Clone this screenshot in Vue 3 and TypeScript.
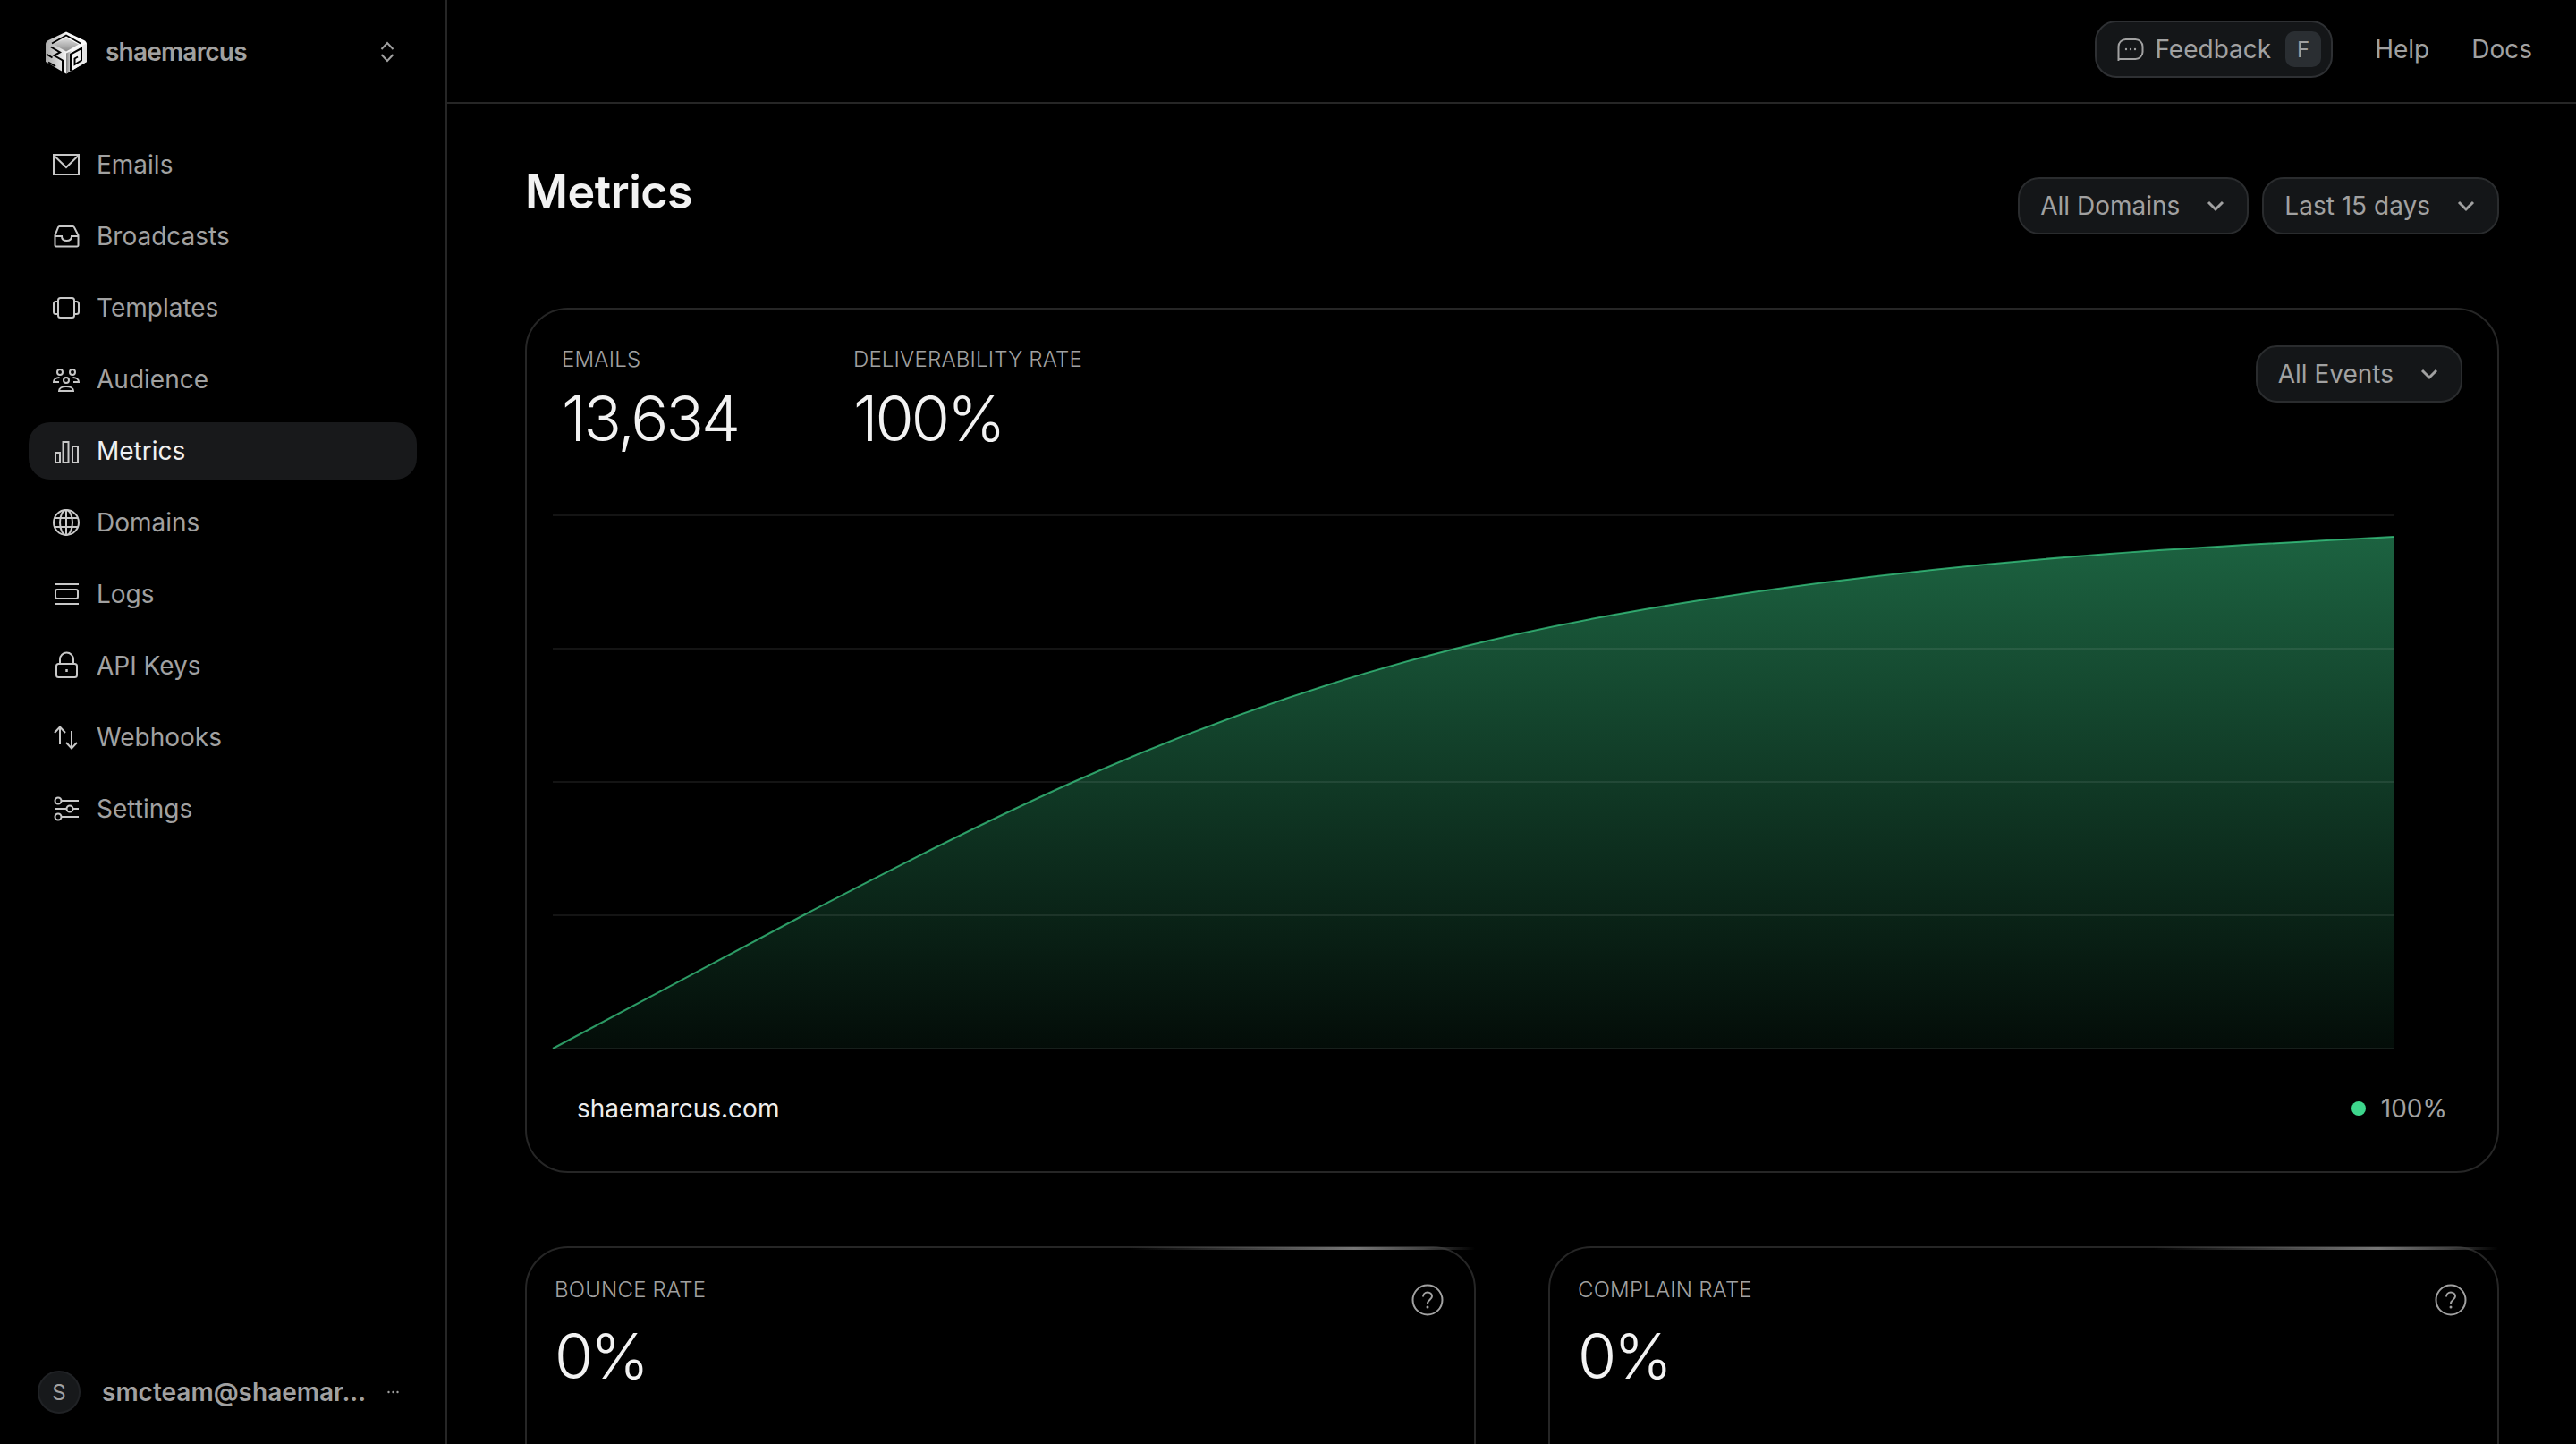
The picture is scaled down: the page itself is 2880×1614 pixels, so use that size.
<script setup lang="ts">
interface NavItem {
  label: string
  icon: string
  active?: boolean
}

const navItems: NavItem[] = [
  { label: 'Emails', icon: '<rect x="2" y="5" width="28" height="22"/><path d="M2.5 6 16 19 29.5 6"/>' },
  { label: 'Broadcasts', icon: '<path d="M8.5 5h15a1.5 1.5 0 0 1 1.4.9L29.5 15v11a1.5 1.5 0 0 1-1.5 1.5H5A1.5 1.5 0 0 1 3.500 26V15L7.100 5.900A1.500 1.500 0 0 1 8.500 5Z"/><path d="M3.500 16H11c0 3 2 5 5.500 5s5.500-2 5.500-5h7.500"/>' },
  { label: 'Templates', icon: '<rect x="7" y="5" width="18" height="22" rx="2.500"/><path d="M7 9H4.500A2.500 2.500 0 0 0 2 11.500v9A2.500 2.500 0 0 0 4.500 23H7"/><path d="M25 9h2.500a2.500 2.500 0 0 1 2.500 2.500v9a2.500 2.500 0 0 1-2.500 2.500H25"/>' },
  { label: 'Audience', icon: '<circle cx="9" cy="8" r="3"/><circle cx="23" cy="8" r="3"/><circle cx="16" cy="17" r="3"/><path d="M8.500 14C5 14 2 16 2 19h6"/><path d="M23.500 14c3.500 0 6.500 2 6.500 5h-6"/><path d="M8 29c0-3 3.500-5 8-5s8 2 8 5Z"/>' },
  { label: 'Metrics', active: true, icon: '<rect x="4" y="18" width="5" height="11"/><rect x="12.500" y="6" width="6" height="23"/><rect x="23" y="11" width="6" height="18"/>' },
  { label: 'Domains', icon: '<circle cx="16" cy="16" r="14"/><ellipse cx="16" cy="16" rx="7" ry="14"/><path d="M16 2v28M3 11h26M3 21h26"/>' },
  { label: 'Logs', icon: '<path d="M3 5h27M3 27h27"/><rect x="4" y="11" width="25" height="10" rx="2"/>' },
  { label: 'API Keys', icon: '<rect x="5" y="14" width="23" height="15" rx="2.500"/><path d="M9 14V9a7.500 7.500 0 0 1 15 0v5"/><path d="M16.500 20v3" stroke-width="2.500"/>' },
  { label: 'Webhooks', icon: '<path d="M9 5v19M3 11l6-6.500 6 6.500"/><path d="M22 9v19M16 22l6 6.500 6-6.500"/>' },
  { label: 'Settings', icon: '<path d="M10.500 7H30M3 16h13.500M24 16h6M10.500 25H30"/><circle cx="7" cy="7" r="3.500"/><circle cx="20" cy="16" r="3.500"/><circle cx="7" cy="25" r="3.500"/>' },
]

const curve: [number, number][] = [
  [618, 1172], [900, 1022], [1200, 874], [1627, 725], [1900, 671], [2359, 619], [2676, 600],
]

// Natural cubic spline through the samples, written out as Bezier segments.
function linePath(pts: [number, number][]): string {
  const n = pts.length
  const h: number[] = []
  for (let i = 0; i < n - 1; i++) h.push(pts[i + 1][0] - pts[i][0])
  const m: number[] = new Array(n).fill(0)
  const c: number[] = new Array(n).fill(0)
  const e: number[] = new Array(n).fill(0)
  for (let i = 1; i < n - 1; i++) {
    const rhs = 6 * ((pts[i + 1][1] - pts[i][1]) / h[i] - (pts[i][1] - pts[i - 1][1]) / h[i - 1])
    const denom = 2 * (h[i - 1] + h[i]) - h[i - 1] * c[i - 1]
    c[i] = h[i] / denom
    e[i] = (rhs - h[i - 1] * e[i - 1]) / denom
  }
  for (let i = n - 2; i > 0; i--) m[i] = e[i] - c[i] * m[i + 1]
  let d = `M${pts[0][0]} ${pts[0][1]}`
  for (let i = 0; i < n - 1; i++) {
    const slope = (pts[i + 1][1] - pts[i][1]) / h[i]
    const t0 = slope - (h[i] * (2 * m[i] + m[i + 1])) / 6
    const t1 = slope + (h[i] * (m[i] + 2 * m[i + 1])) / 6
    const step = h[i] / 3
    d += ` C${pts[i][0] + step} ${pts[i][1] + t0 * step} ${pts[i + 1][0] - step} ${pts[i + 1][1] - t1 * step} ${pts[i + 1][0]} ${pts[i + 1][1]}`
  }
  return d
}

const line = linePath(curve)
const area = `${line} L2676 1172 L618 1172 Z`
const gridLines = [576, 725, 874, 1023, 1172]
const statCards = [
  { label: 'BOUNCE RATE', value: '0%' },
  { label: 'COMPLAIN RATE', value: '0%' },
]
</script>

<template>
  <div class="app">
    <aside class="sidebar">
      <div class="brand">
        <svg class="logo" viewBox="0 0 48 48" fill="none">
          <defs>
            <linearGradient id="lg-left" x1="0" y1="0" x2="1" y2="0">
              <stop offset="0" stop-color="#a8a8a8" />
              <stop offset="0.5" stop-color="#f4f4f4" />
              <stop offset="1" stop-color="#ffffff" />
            </linearGradient>
            <linearGradient id="lg-right" x1="0" y1="0" x2="1" y2="0">
              <stop offset="0" stop-color="#808080" />
              <stop offset="0.3" stop-color="#f8f8f8" />
              <stop offset="1" stop-color="#e4e4e4" />
            </linearGradient>
            <linearGradient id="lg-top" x1="0" y1="0" x2="0" y2="1">
              <stop offset="0" stop-color="#e0e0e0" />
              <stop offset="1" stop-color="#8a8a8a" />
            </linearGradient>
          </defs>
          <path d="M24 1 44 10.500Q47 12 47 15V34.500L24 48 1 34.500V15Q1 12 4 10.500Z" fill="url(#lg-left)" />
          <path d="M24 25 47 14V34.500L24 48Z" fill="url(#lg-right)" />
          <path d="M24 8 38 15 24 23 10 15Z" fill="url(#lg-top)" />
          <path d="M8 14 24 5 40 14" stroke="#000" stroke-width="1.800" />
          <path d="M7 18 17 24 10.500 27.500 20 33V46M2 26 8.500 30M4 35 12 39.500" stroke="#000" stroke-width="2" />
          <path d="M29 45V26L41 19.500V33L33.500 37.500V31L37 29" stroke="#000" stroke-width="2" />
        </svg>
        <span class="brand-name">shaemarcus</span>
        <svg class="updown" viewBox="0 0 16 24" fill="none" stroke="currentColor" stroke-width="2">
          <path d="M1.500 9 8 2l6.500 7M1.500 15 8 22l6.500-7" />
        </svg>
      </div>

      <nav class="nav">
        <a v-for="item in navItems" :key="item.label" class="nav-item" :class="{ active: item.active }">
          <svg class="nav-icon" viewBox="0 0 32 32" fill="none" stroke="currentColor" stroke-width="2" v-html="item.icon"></svg>
          <span>{{ item.label }}</span>
        </a>
      </nav>

      <div class="user">
        <span class="avatar">S</span>
        <span class="email">smcteam@shaemar...</span>
        <svg class="more" viewBox="0 0 14 4" fill="currentColor">
          <circle cx="2" cy="2" r="1.200" />
          <circle cx="7" cy="2" r="1.200" />
          <circle cx="12" cy="2" r="1.200" />
        </svg>
      </div>
    </aside>

    <main class="main">
      <header class="topbar">
        <button class="feedback">
          <svg class="feedback-icon" viewBox="0 0 30 26" fill="none" stroke="currentColor" stroke-width="2">
            <path d="M1.500 25V10A8 8 0 0 1 9.500 2h11a8 8 0 0 1 8 8v6a8 8 0 0 1-8 8h-18Z" />
            <circle cx="10" cy="13" r="1.200" fill="currentColor" stroke="none" />
            <circle cx="15" cy="13" r="1.200" fill="currentColor" stroke="none" />
            <circle cx="20" cy="13" r="1.200" fill="currentColor" stroke="none" />
          </svg>
          <span class="feedback-label">Feedback</span>
          <kbd class="key">F</kbd>
        </button>
        <a class="top-link">Help</a>
        <a class="top-link">Docs</a>
      </header>

      <div class="content">
        <div class="page-head">
          <h1 class="title">Metrics</h1>
          <div class="filters">
            <button class="select">
              <span>All Domains</span>
              <svg class="chev" viewBox="0 0 24 24" fill="none" stroke="currentColor" stroke-width="3"><path d="M4 8l8 8 8-8" /></svg>
            </button>
            <button class="select">
              <span>Last 15 days</span>
              <svg class="chev" viewBox="0 0 24 24" fill="none" stroke="currentColor" stroke-width="3"><path d="M4 8l8 8 8-8" /></svg>
            </button>
          </div>
        </div>

        <section class="chart-card">
          <div class="chart-head">
            <div class="stats">
              <div class="stat">
                <div class="label">EMAILS</div>
                <div class="value">13,634</div>
              </div>
              <div class="stat">
                <div class="label">DELIVERABILITY RATE</div>
                <div class="value">100%</div>
              </div>
            </div>
            <button class="select">
              <span>All Events</span>
              <svg class="chev" viewBox="0 0 24 24" fill="none" stroke="currentColor" stroke-width="3"><path d="M4 8l8 8 8-8" /></svg>
            </button>
          </div>

          <svg class="chart" viewBox="589 570 2203 610" fill="none">
            <defs>
              <linearGradient id="area-fill" x1="0" y1="600" x2="0" y2="1172" gradientUnits="userSpaceOnUse">
                <stop offset="0" stop-color="#3dd68c" stop-opacity="0.46" />
                <stop offset="1" stop-color="#3dd68c" stop-opacity="0.06" />
              </linearGradient>
            </defs>
            <path :d="area" fill="url(#area-fill)" />
            <line
              v-for="y in gridLines"
              :key="y"
              x1="618"
              x2="2676"
              :y1="y"
              :y2="y"
              stroke="#ffffff"
              stroke-opacity="0.08"
              stroke-width="2"
            />
            <path :d="line" stroke="#3dd68c" stroke-opacity="0.7" stroke-width="2" />
          </svg>

          <div class="chart-foot">
            <span class="domain">shaemarcus.com</span>
            <span class="rate"><i class="dot"></i>100%</span>
          </div>
        </section>

        <section class="stat-grid">
          <div v-for="card in statCards" :key="card.label" class="stat-card">
            <i class="gleam"></i>
            <div>
              <div class="label">{{ card.label }}</div>
              <div class="value small">{{ card.value }}</div>
            </div>
            <svg class="help" viewBox="0 0 36 36" fill="none" stroke="currentColor" stroke-width="2">
              <circle cx="18" cy="18" r="16.500" />
              <path d="M13 14.500c0-3 2.200-5 5-5s5 2 5 4.500c0 3.500-5 4-5 8" />
              <circle cx="18" cy="26" r="1.500" fill="currentColor" stroke="none" />
            </svg>
          </div>
        </section>
      </div>
    </main>
  </div>
</template>

<style scoped>
.app {
  display: flex;
  width: 2880px;
  height: 1614px;
  overflow: hidden;
  background: #000;
  color: #a1a1a1;
  font-family: Inter, "Liberation Sans", sans-serif;
  font-size: 28px;
}

.sidebar {
  display: flex;
  flex-direction: column;
  flex: none;
  width: 500px;
  box-sizing: border-box;
  border-right: 2px solid #262626;
}

.brand {
  display: flex;
  align-items: center;
  flex: none;
  height: 116px;
  box-sizing: border-box;
  padding: 0 57px 0 50px;
}
.logo {
  width: 48px;
  height: 49px;
  flex: none;
}
.brand-name {
  margin-left: 20px;
  font-weight: 600;
  letter-spacing: -0.8px;
  flex: 1;
}
.updown {
  width: 16px;
  height: 24px;
  flex: none;
}

.nav {
  display: flex;
  flex-direction: column;
  gap: 16px;
  margin: 36px 32px 0;
}
.nav-item {
  display: flex;
  align-items: center;
  gap: 18px;
  height: 64px;
  padding-left: 26px;
  border-radius: 24px;
}
.nav-item.active {
  background: #18191b;
  color: #f0f0f0;
}
.nav-icon {
  width: 32px;
  height: 32px;
  flex: none;
  color: #c8c8c8;
}

.user {
  display: flex;
  align-items: center;
  margin-top: auto;
  margin-bottom: 34px;
  padding-left: 42px;
  height: 48px;
}
.avatar {
  display: flex;
  align-items: center;
  justify-content: center;
  flex: none;
  width: 48px;
  height: 48px;
  box-sizing: border-box;
  border-radius: 50%;
  background: #17191b;
  border: 2px solid #202225;
  font-size: 24px;
}
.email {
  width: 293px;
  margin-left: 24px;
  white-space: nowrap;
  font-weight: 600;
  flex: none;
}
.more {
  width: 15px;
  height: 4px;
  margin-left: 25px;
  flex: none;
}

.main {
  flex: 1;
  min-width: 0;
  display: flex;
  flex-direction: column;
}

.topbar {
  display: flex;
  align-items: center;
  justify-content: flex-end;
  gap: 47px;
  flex: none;
  height: 116px;
  box-sizing: border-box;
  padding: 0 49px 4px 0;
  border-bottom: 2px solid #262626;
}
.feedback {
  display: flex;
  align-items: center;
  height: 64px;
  box-sizing: border-box;
  padding: 0 11px 0 23px;
  background: #141618;
  border: 2px solid #2e3033;
  border-radius: 24px;
  color: inherit;
  font: inherit;
}
.feedback-icon {
  width: 30px;
  height: 26px;
  flex: none;
}
.feedback-label {
  margin-left: 12px;
}
.key {
  display: flex;
  align-items: center;
  justify-content: center;
  width: 40px;
  height: 40px;
  margin-left: 16px;
  border-radius: 10px;
  background: #2a2e32;
  font: inherit;
  font-size: 24px;
}

.content {
  padding: 65px 86px 0 87px;
}

.page-head {
  display: flex;
  justify-content: space-between;
  align-items: flex-start;
  height: 68px;
  margin-bottom: 95px;
}
.title {
  margin: 0;
  color: #f2f2f2;
  font-size: 52px;
  line-height: 68px;
  font-weight: 600;
  letter-spacing: -0.5px;
}
.filters {
  display: flex;
  gap: 15px;
  margin-top: 17px;
}
.select {
  display: flex;
  align-items: center;
  gap: 28px;
  height: 64px;
  box-sizing: border-box;
  padding: 0 23px;
  background: #141618;
  border: 2px solid #2a2c2e;
  border-radius: 24px;
  color: inherit;
  font: inherit;
}
.chev {
  width: 24px;
  height: 24px;
  flex: none;
}

.chart-card {
  border: 2px solid #262626;
  border-radius: 48px;
}
.chart-head {
  display: flex;
  justify-content: space-between;
  align-items: flex-start;
  height: 123px;
  padding: 40px 39px 0 39px;
}
.stats {
  display: flex;
  gap: 129px;
}
.label {
  font-size: 24px;
  line-height: 32px;
  font-weight: 350;
  letter-spacing: 0.2px;
}
.value {
  margin-top: 10px;
  color: #f2f2f2;
  font-size: 70px;
  line-height: 80px;
  font-weight: 300;
  letter-spacing: -3px;
}
.value.small {
  margin-top: 18px;
}
.chart {
  display: block;
  width: 2203px;
  height: 610px;
  margin-top: 61px;
}
.chart-foot {
  display: flex;
  justify-content: space-between;
  align-items: center;
  height: 40px;
  margin-top: 39px;
  padding: 0 56px 50px 56px;
}
.domain {
  color: #ededed;
}
.rate {
  display: flex;
  align-items: center;
  gap: 17px;
}
.dot {
  width: 16px;
  height: 16px;
  border-radius: 50%;
  background: #3dd68c;
}

.stat-grid {
  display: grid;
  grid-template-columns: 1fr 1fr;
  gap: 81px;
  margin-top: 82px;
}
.stat-card {
  position: relative;
  display: flex;
  justify-content: space-between;
  align-items: flex-start;
  height: 400px;
  box-sizing: border-box;
  padding: 31px 34px 0 31px;
  border: 2px solid #262626;
  border-radius: 48px;
}
.gleam {
  position: absolute;
  top: -1px;
  left: 675px;
  width: 385px;
  height: 3px;
  background: linear-gradient(90deg, transparent, #666 55%, #777 65%, #444 85%, transparent);
}
.help {
  width: 36px;
  height: 36px;
  margin-top: 9px;
  flex: none;
}
</style>

<style>
html,
body {
  margin: 0;
  background: #000;
}
</style>
